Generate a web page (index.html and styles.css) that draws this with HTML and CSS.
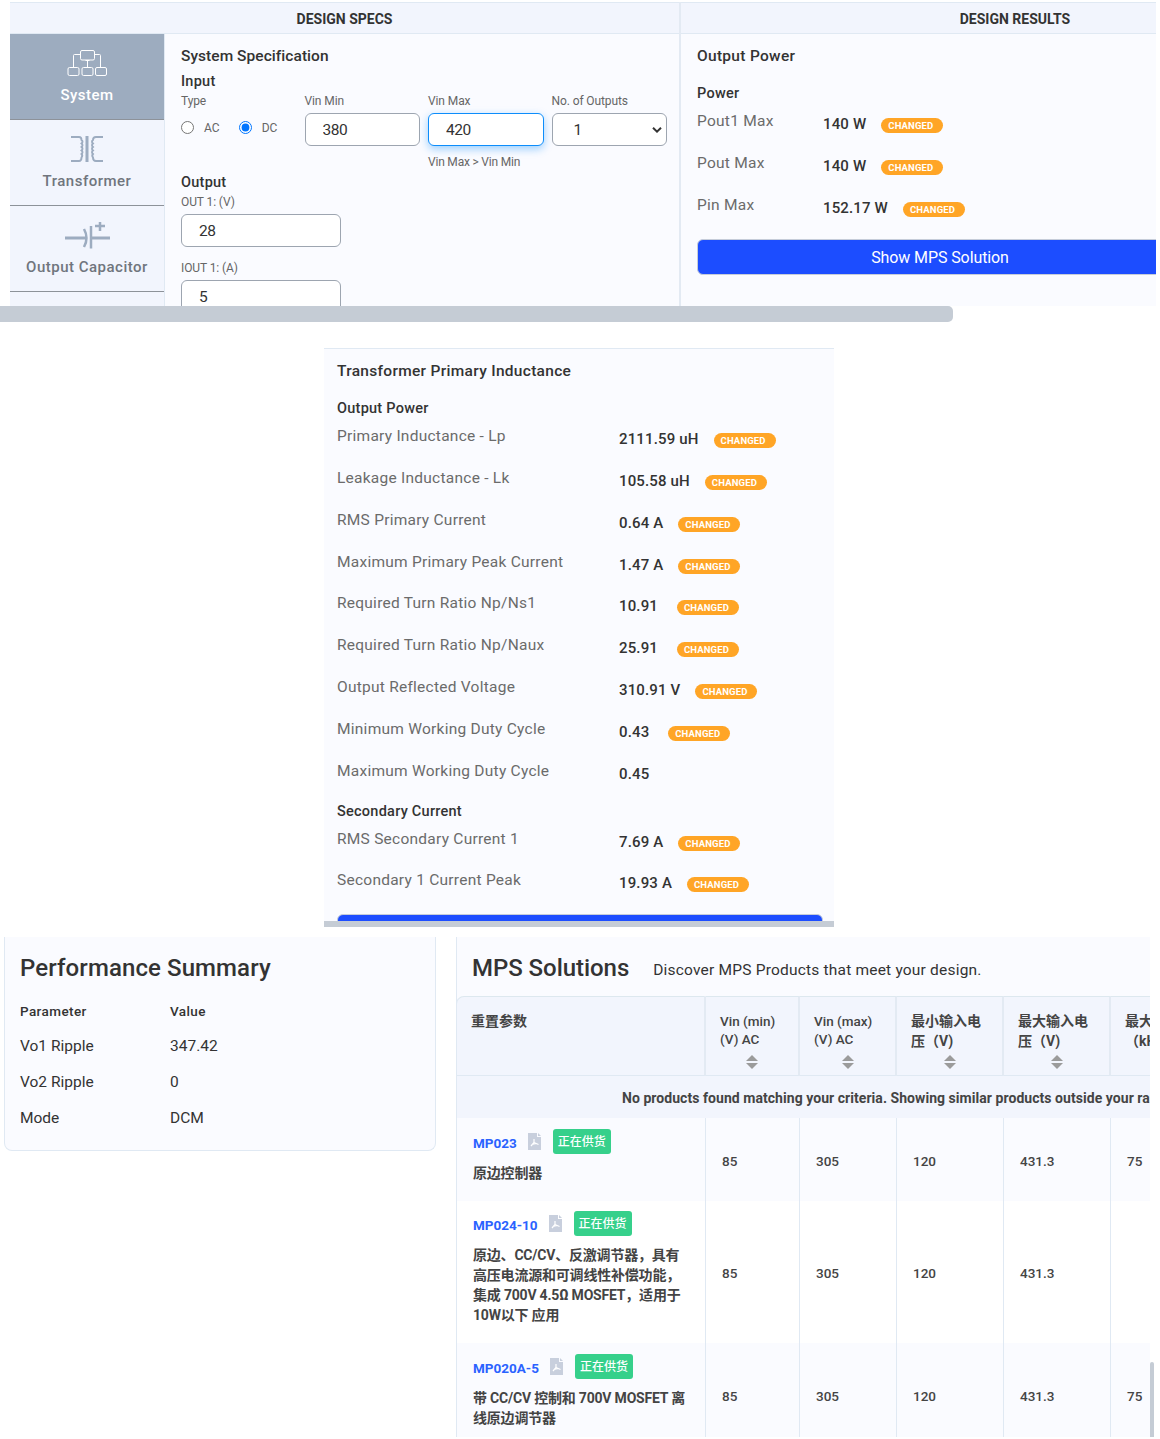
FILE: index.html
```html
<!DOCTYPE html>
<html lang="zh-CN">
<head>
	<meta charset="UTF-8">
	<title>Design Tool</title>
	<link rel="stylesheet" href="styles.css">
</head>
<body>
	<!-- specs and results -->
	<div class="designer">
		<div class="specs">
			<div class="bar">DESIGN SPECS</div>
			<div class="specs-body">
				<ul class="tabs">
					<li class="cur">
						<svg width="40" height="28" viewBox="0 0 40 28" fill="none" stroke="currentColor" stroke-width="1">
							<rect x="13.5" y="1.5" width="14" height="9.5" rx="1.5"/>
							<path d="M13 5.500H7.500Q6.500 5.500 6.500 6.500V18M28 5.500H32.500Q33.500 5.500 33.500 6.500V18M20.500 11V18M18.500 11.500h4"/>
							<rect x="1" y="18.500" width="11" height="8" rx="1.500"/>
							<rect x="15" y="18.500" width="11" height="8" rx="1.500"/>
							<rect x="28.500" y="18.500" width="11" height="8" rx="1.500"/>
						</svg>
						<span>System</span>
					</li>
					<li>
						<svg width="34" height="28" viewBox="0 0 34 28" fill="none" stroke="currentColor" stroke-width="1.900">
							<path d="M1 2H9Q11.500 2 11.500 5q2 1.500 0 3.500q2 1.500 0 3.500q2 1.500 0 3.500q2 1.500 0 3.500q1.500 1.500 0 3.500Q11.500 26 9 26H1"/>
							<path d="M17 1v26" stroke-width="3"/>
							<path d="M33 2H26Q23 2 23 5q-2 1.500 0 3.500q-2 1.500 0 3.500q-2 1.500 0 3.500q-2 1.500 0 3.500q-1.500 1.500 0 3.500Q23 26 26 26H33"/>
						</svg>
						<span>Transformer</span>
					</li>
					<li>
						<svg width="46" height="28" viewBox="0 0 46 28" fill="none" stroke="currentColor" stroke-width="3">
							<path d="M1 17H22M27 17H46"/>
							<path d="M20 8Q25 17 20 26" stroke-width="2.500"/>
							<path d="M27 5V27.500" stroke-width="2.500"/>
							<path d="M31 5H41M36 1V10" stroke-width="2.500"/>
						</svg>
						<span>Output Capacitor</span>
					</li>
					<li></li>
				</ul>
				<div class="form">
					<h3>System Specification</h3>
					<h4>Input</h4>
					<div class="fields">
						<div class="field">
							<label>Type</label>
							<div class="radios">
								<input type="radio" name="type"><span>AC</span>
								<input type="radio" name="type" checked><span>DC</span>
							</div>
						</div>
						<div class="field">
							<label>Vin Min</label>
							<input class="text" type="text" value="380">
						</div>
						<div class="field">
							<label>Vin Max</label>
							<input class="text active" type="text" value="420">
							<p>Vin Max &gt; Vin Min</p>
						</div>
						<div class="field">
							<label>No. of Outputs</label>
							<div class="select">1
								<svg width="10" height="6" viewBox="0 0 10 6" fill="none" stroke="#333" stroke-width="2"><path d="M1 .8L5 4.600L9 .8"/></svg>
							</div>
						</div>
					</div>
					<h4 class="out">Output</h4>
					<div class="field wide">
						<label>OUT 1: (V)</label>
						<input class="text" type="text" value="28">
					</div>
					<div class="field wide">
						<label>IOUT 1: (A)</label>
						<input class="text" type="text" value="5">
					</div>
				</div>
			</div>
		</div>
		<div class="results">
			<div class="bar">DESIGN RESULTS</div>
			<div class="results-body">
				<h3>Output Power</h3>
				<h4>Power</h4>
				<ul class="rows">
					<li><span>Pout1 Max</span><b>140 W</b><i>CHANGED</i></li>
					<li><span>Pout Max</span><b>140 W</b><i>CHANGED</i></li>
					<li><span>Pin Max</span><b>152.17 W</b><i>CHANGED</i></li>
				</ul>
				<div class="btn">Show MPS Solution</div>
			</div>
		</div>
	</div>
	<div class="scroll-x"></div>

	<!-- transformer results -->
	<div class="inductance">
		<h3>Transformer Primary Inductance</h3>
		<h4>Output Power</h4>
		<ul class="rows">
			<li><span>Primary Inductance - Lp</span><b>2111.59 uH</b><i>CHANGED</i></li>
			<li><span>Leakage Inductance - Lk</span><b>105.58 uH</b><i>CHANGED</i></li>
			<li><span>RMS Primary Current</span><b>0.64 A</b><i>CHANGED</i></li>
			<li><span>Maximum Primary Peak Current</span><b>1.47 A</b><i>CHANGED</i></li>
			<li><span>Required Turn Ratio Np/Ns1</span><b>10.91 </b><i>CHANGED</i></li>
			<li><span>Required Turn Ratio Np/Naux</span><b>25.91 </b><i>CHANGED</i></li>
			<li><span>Output Reflected Voltage</span><b>310.91 V</b><i>CHANGED</i></li>
			<li><span>Minimum Working Duty Cycle</span><b>0.43 </b><i>CHANGED</i></li>
			<li><span>Maximum Working Duty Cycle</span><b>0.45</b></li>
		</ul>
		<h4 class="second">Secondary Current</h4>
		<ul class="rows">
			<li><span>RMS Secondary Current 1</span><b>7.69 A</b><i>CHANGED</i></li>
			<li><span>Secondary 1 Current Peak</span><b>19.93 A</b><i>CHANGED</i></li>
		</ul>
		<div class="btn"></div>
	</div>

	<!-- summary and solutions -->
	<div class="bottom">
		<div class="summary">
			<h2>Performance Summary</h2>
			<dl>
				<dt class="th">Parameter</dt><dd class="th">Value</dd>
				<dt>Vo1 Ripple</dt><dd>347.42</dd>
				<dt>Vo2 Ripple</dt><dd>0</dd>
				<dt>Mode</dt><dd>DCM</dd>
			</dl>
		</div>
		<div class="solutions">
			<div class="title">
				<h2>MPS Solutions</h2>
				<p>Discover MPS Products that meet your design.</p>
			</div>
			<table>
				<colgroup><col class="c1"><col class="c2"><col class="c3"><col class="c4"><col class="c4"><col class="c4"></colgroup>
				<tr class="head">
					<th class="cn">重置参数</th>
					<th>Vin (min)<br>(V) AC<em></em></th>
					<th>Vin (max)<br>(V) AC<em></em></th>
					<th class="cn">最小输入电<br>压（V)<em></em></th>
					<th class="cn">最大输入电<br>压（V)<em></em></th>
					<th class="cn">最大频率<br>（kHz)<em></em></th>
				</tr>
				<tr class="msg"><td colspan="6">No products found matching your criteria. Showing similar products outside your range.</td></tr>
				<tr class="odd">
					<td class="product">
						<div class="name"><a href="#">MP023</a><svg class="pdf" width="13" height="17" viewBox="0 0 13 17"><path d="M0 0H9V4H13V17H0Z" fill="#c8cfdd"/><path d="M10 0L13 3H10Z" fill="#c8cfdd"/><path d="M6 6V9.500L3 13M6 9.500L10.500 11.500M4 11.500L8 10.500" stroke="#fff" stroke-width="1.200" fill="none"/></svg><span>正在供货</span></div>
						<p>原边控制器</p>
					</td>
					<td>85</td><td>305</td><td>120</td><td>431.3</td><td>75</td>
				</tr>
				<tr>
					<td class="product">
						<div class="name"><a href="#">MP024-10</a><svg class="pdf" width="13" height="17" viewBox="0 0 13 17"><path d="M0 0H9V4H13V17H0Z" fill="#c8cfdd"/><path d="M10 0L13 3H10Z" fill="#c8cfdd"/><path d="M6 6V9.500L3 13M6 9.500L10.500 11.500M4 11.500L8 10.500" stroke="#fff" stroke-width="1.200" fill="none"/></svg><span>正在供货</span></div>
						<p>原边、CC/CV、反激调节器，具有<br>高压电流源和可调线性补偿功能，<br>集成 700V 4.5Ω MOSFET，适用于<br>10W以下 应用</p>
					</td>
					<td>85</td><td>305</td><td>120</td><td>431.3</td><td></td>
				</tr>
				<tr class="odd last">
					<td class="product">
						<div class="name"><a href="#">MP020A-5</a><svg class="pdf" width="13" height="17" viewBox="0 0 13 17"><path d="M0 0H9V4H13V17H0Z" fill="#c8cfdd"/><path d="M10 0L13 3H10Z" fill="#c8cfdd"/><path d="M6 6V9.500L3 13M6 9.500L10.500 11.500M4 11.500L8 10.500" stroke="#fff" stroke-width="1.200" fill="none"/></svg><span>正在供货</span></div>
						<p>带 CC/CV 控制和 700V MOSFET 离<br>线原边调节器</p>
					</td>
					<td>85</td><td>305</td><td>120</td><td>431.3</td><td>75</td>
				</tr>
			</table>
		</div>
		<div class="scroll-y"></div>
	</div>
</body>
</html>
```
FILE: styles.css
```css
*{
	box-sizing: border-box;
}
body,ul,h2,h3,h4,p,dl,dd{
	margin: 0;
	padding: 0;
}
ul{
	list-style: none;
}
body{
	height: 1439px;
	overflow: hidden;
	background: white;
	color: #333;
	font-family: Roboto, "Noto Sans CJK SC", sans-serif;
	font-size: 16px;
}
h2{
	font-size: 24px;
	font-weight: 500;
	line-height: 30px;
	letter-spacing: .1px;
}
h3{
	font-size: 15.500px;
	font-weight: 500;
	line-height: 20px;
	letter-spacing: .3px;
}
h4{
	font-size: 14.500px;
	font-weight: 500;
	line-height: 20px;
	letter-spacing: .25px;
}

/* top part */
.designer{
	display: flex;
	width: 1156px;
	height: 306px;
	padding: 2px 0 0 10px;
	overflow: hidden;
}
.specs{
	flex: none;
	width: 671px;
	border-right: 2px solid #e3eaf3;
	background: #fafbff;
}
.specs h3{
	letter-spacing: .05px;
}
.results{
	flex: none;
	width: 668px;
	background: #fafbff;
}
.bar{
	height: 32px;
	border-top: 1px solid #e0e9f3;
	border-bottom: 1px solid #e0e9f3;
	background: #f2f5fd;
	font-size: 14px;
	font-weight: 700;
	line-height: 32px;
	text-align: center;
}
.specs-body{
	display: flex;
}
.tabs{
	flex: none;
	width: 155px;
	height: 272px;
	border-right: 1px solid #e0e9f3;
	background: #f2f5fd;
	overflow: hidden;
}
.tabs li{
	display: flex;
	flex-direction: column;
	align-items: center;
	height: 86px;
	padding-top: 15px;
	border-bottom: 1px solid #8d9299;
	color: #9dacc0;
}
.tabs span{
	margin-top: 7px;
	color: #70757d;
	font-size: 15px;
	font-weight: 500;
	line-height: 22px;
	letter-spacing: .5px;
}
.tabs .cur,.tabs .cur span{
	background: #9dacbf;
	color: white;
}
.form{
	padding: 12px 0 0 16px;
}
.form h4{
	height: 19px;
	margin-top: 6px;
}
.fields{
	display: flex;
	gap: 8px;
	height: 81px;
}
.field{
	width: 115.500px;
	color: #666;
	font-size: 12px;
	letter-spacing: -.1px;
}
.field label{
	display: block;
	height: 22px;
	line-height: 20px;
}
.field p{
	line-height: 32px;
	letter-spacing: -.2px;
}
.text,.select{
	display: block;
	width: 100%;
	height: 33px;
	margin: 0;
	padding: 0 17px;
	border: 1px solid #9da5b0;
	border-radius: 6px;
	background: white;
	color: #333;
	font: 15.500px Roboto, sans-serif;
	letter-spacing: -.5px;
	outline: none;
}
.select{
	display: flex;
	align-items: center;
	justify-content: space-between;
	padding: 0 4px 0 21px;
}
.text.active{
	border-color: #0d8dfb;
	box-shadow: 0 3px 8px rgba(13,141,251,.4);
}
.radios{
	display: flex;
	align-items: center;
	height: 29px;
}
.radios input{
	width: 13px;
	height: 13px;
	margin: 0 10px 0 0;
}
.radios span{
	width: 35px;
}
.form .out{
	margin-top: 1px;
}
.wide{
	width: 160px;
	height: 66px;
}

/* results list */
.results-body{
	padding: 12px 16px;
}
.results-body h4{
	margin-top: 18px;
}
.rows li{
	display: flex;
	height: 42px;
	padding-top: 8px;
	line-height: 20px;
}
.rows span{
	flex: none;
	width: 126px;
	margin-top: -1px;
	color: #6b6b6b;
	font-size: 15.500px;
	letter-spacing: .25px;
}
.rows b{
	margin-top: 2px;
	font-size: 15px;
	font-weight: 500;
	letter-spacing: .15px;
	white-space: pre;
}
.rows i{
	width: 62px;
	height: 15px;
	margin: 6px 0 0 15px;
	padding-left: 7px;
	border-radius: 8px;
	background: #ffa526;
	color: white;
	font-size: 9.500px;
	font-style: normal;
	font-weight: 700;
	line-height: 15px;
	letter-spacing: .15px;
}
.btn{
	width: 486px;
	height: 36px;
	border: 1px solid #c5ccd9;
	border-radius: 6px;
	background: #1c4dff;
	color: white;
	line-height: 35px;
	letter-spacing: -.1px;
	text-align: center;
}
.results-body .btn{
	margin-top: 9px;
}
.scroll-x{
	width: 953px;
	height: 16px;
	border-radius: 0 5px 5px 0;
	background: #c5ccd5;
}

/* middle part */
.inductance{
	width: 510px;
	height: 579px;
	margin: 26px 0 0 324px;
	padding: 12px 13px 0;
	border-top: 1px solid #e0e9f3;
	border-bottom: 6px solid #c5ccd5;
	background: #fafbff;
	overflow: hidden;
}
.inductance h3{
	margin-bottom: 18px;
}
.inductance .rows span{
	width: 282px;
}
.inductance .rows li{
	height: 41.850px;
}
.inductance .second{
	margin-top: 6px;
}
.inductance .btn{
	margin-top: 9px;
}

/* bottom part */
.bottom{
	display: flex;
	height: 500px;
	margin-top: 10px;
	padding-left: 4px;
	overflow: hidden;
}
.summary{
	width: 432px;
	height: 214px;
	padding: 16px 15px;
	border: 1px solid #e0e9f3;
	border-top: none;
	border-radius: 0 0 8px 8px;
	background: #fafbff;
}
dl{
	display: grid;
	grid-template-columns: 150px 1fr;
	grid-auto-rows: 36px;
	margin-top: 10px;
	font-size: 15.500px;
	line-height: 34px;
	letter-spacing: 0;
}
dl .th{
	font-size: 13.500px;
	font-weight: 500;
	line-height: 36px;
	letter-spacing: .4px;
}
.solutions{
	width: 694px;
	margin-left: 20px;
	border-left: 1px solid #e0e9f3;
	background: #fafbff;
	overflow: hidden;
}
.title{
	display: flex;
	height: 59px;
	padding: 16px 0 0 15px;
}
.title h2{
	letter-spacing: -.05px;
}
.title p{
	margin-left: 24px;
	font-size: 15.500px;
	line-height: 34px;
	letter-spacing: .2px;
}
table{
	width: 761px;
	margin-left: -1px;
	border-spacing: 0;
	table-layout: fixed;
	color: #444;
	font-size: 13.500px;
	font-weight: 500;
}
.c1{ width: 250px; }
.c2{ width: 94px; }
.c3{ width: 97px; }
.c4{ width: 107px; }
th{
	height: 80px;
	padding: 15px 0 0 14px;
	border-top: 1px solid #dde8ef;
	border-right: 2px solid #e3eaf3;
	border-bottom: 1px solid #e0e9f3;
	background: #f2f5fd;
	font-weight: 500;
	font-size: 13.500px;
	line-height: 18px;
	text-align: left;
	vertical-align: top;
	white-space: nowrap;
	position: relative;
}
th.cn{
	padding-top: 14px;
	font-size: 14px;
	font-weight: 700;
	line-height: 20px;
}
th:first-child{
	border-left: 1px solid #e0e9f3;
	border-radius: 8px 0 0 0;
}
/* sort arrows */
em::before,em::after{
	content: "";
	position: absolute;
	left: 50%;
	top: 58px;
	margin-left: -6px;
	border: 6px solid transparent;
	border-top: none;
	border-bottom-color: #9b9b9b;
}
em::after{
	top: 66px;
	border: 6px solid transparent;
	border-bottom: none;
	border-top-color: #9b9b9b;
}
td{
	padding: 3px 0 0 16px;
	border-right: 1px solid #e0e9f3;
	background: white;
}
.odd td{
	background: #fafbff;
}
.msg td{
	height: 42px;
	padding: 2px 0 0 166px;
	background: #f2f5fd;
	font-weight: 700;
	font-size: 14px;
	letter-spacing: .05px;
	white-space: nowrap;
}
td.product{
	padding: 10.500px 0 18px 16px;
	border-left: 1px solid #e0e9f3;
}
.product p{
	margin-top: 9px;
	font-size: 14px;
	font-weight: 700;
	line-height: 20px;
	letter-spacing: -.2px;
	white-space: nowrap;
}
.name{
	display: flex;
	align-items: center;
	height: 25px;
}
.name a{
	color: #2a62ff;
	font-weight: 700;
	text-decoration: none;
	padding-top: 3px;
}
.pdf{
	margin: 0 12px 0 11px;
}
.name span{
	width: 58px;
	height: 25px;
	border-radius: 3px;
	background: #36d08b;
	color: white;
	font-size: 12px;
	line-height: 26px;
	text-align: center;
}
.scroll-y{
	width: 4px;
	margin-top: 425px;
	border-radius: 3px 3px 0 0;
	background: #c5ccd5;
}
```
